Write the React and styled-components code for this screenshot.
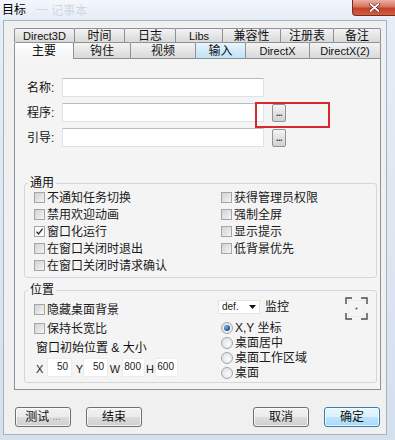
import React from 'react';
import styled, { createGlobalStyle } from 'styled-components';

const GlobalStyle = createGlobalStyle`
  html, body {
    margin: 0;
    padding: 0;
    background: #d6e2ef;
  }
  body {
    width: 395px;
    height: 440px;
    overflow: hidden;
    font-family: "Liberation Sans", "Noto Sans CJK SC", sans-serif;
    color: #111;
  }
`;

const Frame = styled.div`
  width: 395px;
  height: 440px;
  display: flex;
  flex-direction: column;
  background: linear-gradient(180deg, #f4f7fb 0px, #e6edf6 20px, #d5e0ed 100%);
`;

const TitleBar = styled.div`
  height: 20px;
  flex: none;
  display: flex;
  align-items: flex-start;
`;

const Title = styled.span`
  font-size: 12px;
  line-height: 12px;
  margin: 4px 0 0 2px;
  color: #000;
`;

const GhostTitle = styled.span`
  font-size: 12px;
  line-height: 12px;
  margin: 5px 0 0 10px;
  color: #cdd7e2;
  filter: blur(0.7px);
`;

const CloseButton = styled.div`
  margin-left: auto;
  width: 43px;
  height: 16px;
  border: 1px solid #7a2a20;
  border-top: none;
  border-right: none;
  border-radius: 0 0 0 4px;
  box-sizing: border-box;
  background: linear-gradient(180deg, #eab0a4 0%, #d8735f 45%, #c2412b 55%, #d0603f 100%);
  display: flex;
  align-items: center;
  justify-content: center;
`;

const Client = styled.div`
  flex: 1;
  margin: 0 8px 5px 3px;
  border: 1px solid #a5b2c2;
  background: #f0f0f0;
  padding: 7px 5px 0 10px;
  display: flex;
  flex-direction: column;
`;

const TabRow = styled.div`
  display: flex;
  align-items: flex-start;
  height: ${p => p.$h}px;
  position: relative;
  z-index: ${p => p.$z};
`;

const Tab = styled.div`
  width: ${p => p.$w + 1}px;
  height: ${p => p.$h}px;
  flex: none;
  box-sizing: border-box;
  margin-right: -1px;
  border: 1px solid #8e9297;
  border-bottom: none;
  border-radius: 2px 2px 0 0;
  background: ${p =>
    p.$active
      ? 'linear-gradient(180deg, #ffffff, #f4f4f4)'
      : p.$hover
      ? 'linear-gradient(180deg, #e9f5fd, #d3ebfa 50%, #c2e2f7)'
      : 'linear-gradient(180deg, #f3f3f3, #e6e6e6 50%, #d9d9d9)'};
  display: flex;
  align-items: center;
  justify-content: center;
  font-size: ${p => (p.$latin ? 11 : 12)}px;
  line-height: 12px;
  color: #111;
  position: relative;
  z-index: ${p => (p.$active ? 2 : 1)};
`;

const Panel = styled.div`
  width: 367px;
  box-sizing: border-box;
  border: 1px solid #8e9297;
  background: #f4f4f4;
  padding: 19px 3px 6px 9px;
  display: flex;
  flex-direction: column;
`;

const Fields = styled.div`
  display: flex;
  flex-direction: column;
  gap: 6px;
  margin-left: 3px;
`;

const FieldRow = styled.div`
  display: flex;
  align-items: center;
  height: 19px;
  position: relative;
`;

const FieldLabel = styled.span`
  width: 35px;
  font-size: 12px;
  line-height: 12px;
`;

const TextInput = styled.div`
  width: 202px;
  height: 19px;
  box-sizing: border-box;
  background: #fff;
  border: 1px solid #dde2e8;
  border-top-color: #b9bdc3;
`;

const BrowseButton = styled.div`
  width: 14px;
  height: 18px;
  margin-left: 8px;
  box-sizing: border-box;
  border: 1px solid #8f9398;
  border-radius: 2px;
  background: linear-gradient(180deg, #f4f4f4, #e2e2e2 50%, #d2d2d2);
  display: flex;
  align-items: flex-end;
  justify-content: center;
  padding-bottom: 4px;
  font-size: 9px;
  line-height: 8px;
  font-weight: bold;
  color: #333;
  letter-spacing: -0.5px;
`;

const Highlight = styled.div`
  position: absolute;
  left: 228px;
  top: -1px;
  width: 75px;
  height: 26px;
  box-sizing: border-box;
  border: 2px solid #d52b2f;
`;

const Group = styled.fieldset`
  margin: ${p => p.$mt}px 0 0 0;
  padding: 0 8px ${p => p.$pb}px 9px;
  border: 1px solid #d3d7dc;
  border-radius: 3px;
  min-width: 0;
`;

const Legend = styled.legend`
  padding: 0 2px;
  margin-left: -6px;
  font-size: 12px;
  line-height: 12px;
`;

const GroupGrid = styled.div`
  display: grid;
  grid-template-columns: ${p => p.$col}px 1fr;
`;

const Column = styled.div`
  display: flex;
  flex-direction: column;
  padding-top: ${p => p.$pt || 0}px;
`;

const CheckRow = styled.div`
  display: flex;
  align-items: center;
  gap: 2px;
  height: ${p => p.$h}px;
  font-size: 12px;
  line-height: 12px;
  color: #1a1a1a;
`;

const Box = styled.span`
  width: 11px;
  height: 11px;
  flex: none;
  box-sizing: border-box;
  border: 1px solid #a2a6ab;
  background: ${p =>
    p.$checked ? '#fbfbfb' : 'linear-gradient(135deg, #d2d2d2, #e6e6e6 60%, #f6f6f6)'};
  display: flex;
  align-items: center;
  justify-content: center;
`;

const RadioRow = styled.div`
  display: flex;
  align-items: center;
  gap: 2px;
  height: 15px;
  margin-left: 3px;
  font-size: 12px;
  line-height: 12px;
  color: #1a1a1a;
`;

const RadioDot = styled.span`
  width: 12px;
  height: 12px;
  flex: none;
  box-sizing: border-box;
  border-radius: 50%;
  border: 1px solid #a2a6ab;
  background: radial-gradient(circle at 60% 60%, #fafafa, #dadada);
  display: flex;
  align-items: center;
  justify-content: center;

  &::after {
    content: '';
    display: ${p => (p.$checked ? 'block' : 'none')};
    width: 6px;
    height: 6px;
    border-radius: 50%;
    background: radial-gradient(circle at 35% 35%, #7fb2e5, #1d4f8c 70%);
  }
`;

const Caption = styled.div`
  height: 19px;
  display: flex;
  align-items: center;
  padding-left: 2px;
  font-size: 12px;
  line-height: 12px;
`;

const CoordRow = styled.div`
  height: 21px;
  display: flex;
  align-items: center;
  padding-left: 2px;
`;

const CoordLabel = styled.span`
  width: ${p => p.$w}px;
  text-align: ${p => p.$align};
  font-size: 11px;
  line-height: 11px;
  padding-top: 4px;
  color: #222;
`;

const CoordInput = styled.div`
  width: ${p => p.$w}px;
  height: 19px;
  box-sizing: border-box;
  background: #fff;
  border: 1px solid #ececec;
  font-size: 10px;
  line-height: 10px;
  text-align: right;
  padding: 3px 3px 0 0;
  color: #222;
`;

const MonitorRow = styled.div`
  height: 24px;
  display: flex;
  align-items: center;
  gap: 5px;
`;

const Select = styled.div`
  width: 42px;
  height: 14px;
  box-sizing: border-box;
  margin-top: -3px;
  background: #fff;
  border: 1px solid #e4e4e4;
  display: flex;
  align-items: center;
  justify-content: space-between;
  padding: 0 3px 0 3px;
  font-size: 10px;
  line-height: 10px;
  color: #222;
`;

const MonitorLabel = styled.span`
  font-size: 12px;
  line-height: 12px;
  margin-top: -3px;
`;

const IdentifyIcon = styled.svg`
  margin-left: auto;
  flex: none;
`;

const ButtonBar = styled.div`
  margin-top: 17px;
  padding: 0 1px;
  display: flex;
  justify-content: space-between;
`;

const ButtonGroup = styled.div`
  display: flex;
  gap: 15px;
`;

const Button = styled.div`
  width: 56px;
  height: 20px;
  box-sizing: border-box;
  border: 1px solid ${p => (p.$primary ? '#3d7cab' : '#707070')};
  border-radius: 3px;
  background: ${p =>
    p.$primary
      ? 'linear-gradient(180deg, #eaf6fd, #d9f0fc 50%, #bee6fd 51%, #a7d9f5)'
      : 'linear-gradient(180deg, #f2f2f2, #ebebeb 50%, #dddddd 51%, #cfcfcf)'};
  box-shadow: inset 0 0 0 1px rgba(255, 255, 255, 0.7);
  display: flex;
  align-items: center;
  justify-content: center;
  font-size: 12px;
  line-height: 12px;
  color: #111;
`;

const Dots = styled.span`
  color: #888;
  margin-left: 3px;
  font-size: 10px;
`;

const tabsTop = [
  ['Direct3D', 60, true],
  ['时间', 50],
  ['日志', 51],
  ['Libs', 47, true],
  ['兼容性', 58],
  ['注册表', 53],
  ['备注', 47],
];

const tabsBottom = [
  ['主要', 59, false, 'active'],
  ['钩住', 57],
  ['视频', 65],
  ['输入', 50, false, 'hover'],
  ['DirectX', 64, true],
  ['DirectX(2)', 71, true],
];

const generalLeft = [
  ['不通知任务切换', false],
  ['禁用欢迎动画', false],
  ['窗口化运行', true],
  ['在窗口关闭时退出', false],
  ['在窗口关闭时请求确认', false],
];

const generalRight = ['获得管理员权限', '强制全屏', '显示提示', '低背景优先'];

const coords = [
  ['X', 11, 'left', '50', 25],
  ['Y', 11, 'right', '50', 25],
  ['W', 14, 'center', '800', 23],
  ['H', 10, 'center', '600', 23],
];

const radios = [
  ['X,Y 坐标', true],
  ['桌面居中', false],
  ['桌面工作区域', false],
  ['桌面', false],
];

function Check({ checked }) {
  return (
    <Box $checked={checked}>
      {checked && (
        <svg width="9" height="9" viewBox="0 0 9 9">
          <path d="M1.5 4.8 L3.6 7 L7.6 1.6" fill="none" stroke="#2b2b2b" strokeWidth="1.3" />
        </svg>
      )}
    </Box>
  );
}

export default function App() {
  return (
    <>
      <GlobalStyle />
      <Frame>
        <TitleBar>
          <Title>目标</Title>
          <GhostTitle>一 记事本</GhostTitle>
          <CloseButton>
            <svg width="11" height="9" viewBox="0 0 11 9">
              <path d="M1.5 1 L9.5 8 M9.5 1 L1.5 8" stroke="#5a1a12" strokeWidth="3" strokeLinecap="round" />
              <path d="M1.5 1 L9.5 8 M9.5 1 L1.5 8" stroke="#fff" strokeWidth="1.8" strokeLinecap="round" />
            </svg>
          </CloseButton>
        </TitleBar>

        <Client>
          <TabRow $h={14} $z={0}>
            {tabsTop.map(([label, w, latin]) => (
              <Tab key={label} $w={w} $h={14} $latin={latin}>
                {label}
              </Tab>
            ))}
          </TabRow>
          <TabRow $h={16} $z={1}>
            {tabsBottom.map(([label, w, latin, state]) => (
              <Tab
                key={label}
                $w={w}
                $h={state === 'active' ? 17 : 16}
                $latin={latin}
                $active={state === 'active'}
                $hover={state === 'hover'}
              >
                {label}
              </Tab>
            ))}
          </TabRow>

          <Panel>
            <Fields>
              <FieldRow>
                <FieldLabel>名称:</FieldLabel>
                <TextInput />
              </FieldRow>
              <FieldRow>
                <FieldLabel>程序:</FieldLabel>
                <TextInput />
                <BrowseButton>...</BrowseButton>
                <Highlight />
              </FieldRow>
              <FieldRow>
                <FieldLabel>引导:</FieldLabel>
                <TextInput />
                <BrowseButton>...</BrowseButton>
              </FieldRow>
            </Fields>

            <Group $mt={30} $pb={3}>
              <Legend>通用</Legend>
              <GroupGrid $col={187}>
                <Column>
                  {generalLeft.map(([label, checked]) => (
                    <CheckRow key={label} $h={17}>
                      <Check checked={checked} />
                      {label}
                    </CheckRow>
                  ))}
                </Column>
                <Column>
                  {generalRight.map(label => (
                    <CheckRow key={label} $h={17}>
                      <Check />
                      {label}
                    </CheckRow>
                  ))}
                </Column>
              </GroupGrid>
            </Group>

            <Group $mt={6} $pb={2}>
              <Legend>位置</Legend>
              <GroupGrid $col={184}>
                <Column $pt={4}>
                  <CheckRow $h={19}>
                    <Check />
                    隐藏桌面背景
                  </CheckRow>
                  <CheckRow $h={19}>
                    <Check />
                    保持长宽比
                  </CheckRow>
                  <Caption>窗口初始位置 &amp; 大小</Caption>
                  <CoordRow>
                    {coords.map(([axis, lw, align, value, iw]) => (
                      <React.Fragment key={axis}>
                        <CoordLabel $w={lw} $align={align}>
                          {axis}
                        </CoordLabel>
                        <CoordInput $w={iw}>{value}</CoordInput>
                      </React.Fragment>
                    ))}
                  </CoordRow>
                </Column>
                <Column>
                  <MonitorRow>
                    <Select>
                      def.
                      <svg width="7" height="4" viewBox="0 0 7 4">
                        <path d="M0 0 H7 L3.5 4 Z" fill="#111" />
                      </svg>
                    </Select>
                    <MonitorLabel>监控</MonitorLabel>
                    <IdentifyIcon width="23" height="23" viewBox="0 0 23 23">
                      <rect x="3.5" y="3.5" width="16" height="16" fill="none" stroke="#dcdcdc" strokeDasharray="1 2" />
                      <path
                        d="M1 7 V1 H7 M16 1 H22 V7 M22 16 V22 H16 M7 22 H1 V16"
                        fill="none"
                        stroke="#4a4a4a"
                        strokeWidth="1.4"
                      />
                      <circle cx="11.5" cy="11.5" r="1" fill="#555" />
                    </IdentifyIcon>
                  </MonitorRow>
                  {radios.map(([label, checked]) => (
                    <RadioRow key={label}>
                      <RadioDot $checked={checked} />
                      {label}
                    </RadioRow>
                  ))}
                </Column>
              </GroupGrid>
            </Group>
          </Panel>

          <ButtonBar>
            <ButtonGroup>
              <Button>
                测试<Dots>...</Dots>
              </Button>
              <Button>结束</Button>
            </ButtonGroup>
            <ButtonGroup>
              <Button>取消</Button>
              <Button $primary>确定</Button>
            </ButtonGroup>
          </ButtonBar>
        </Client>
      </Frame>
    </>
  );
}
